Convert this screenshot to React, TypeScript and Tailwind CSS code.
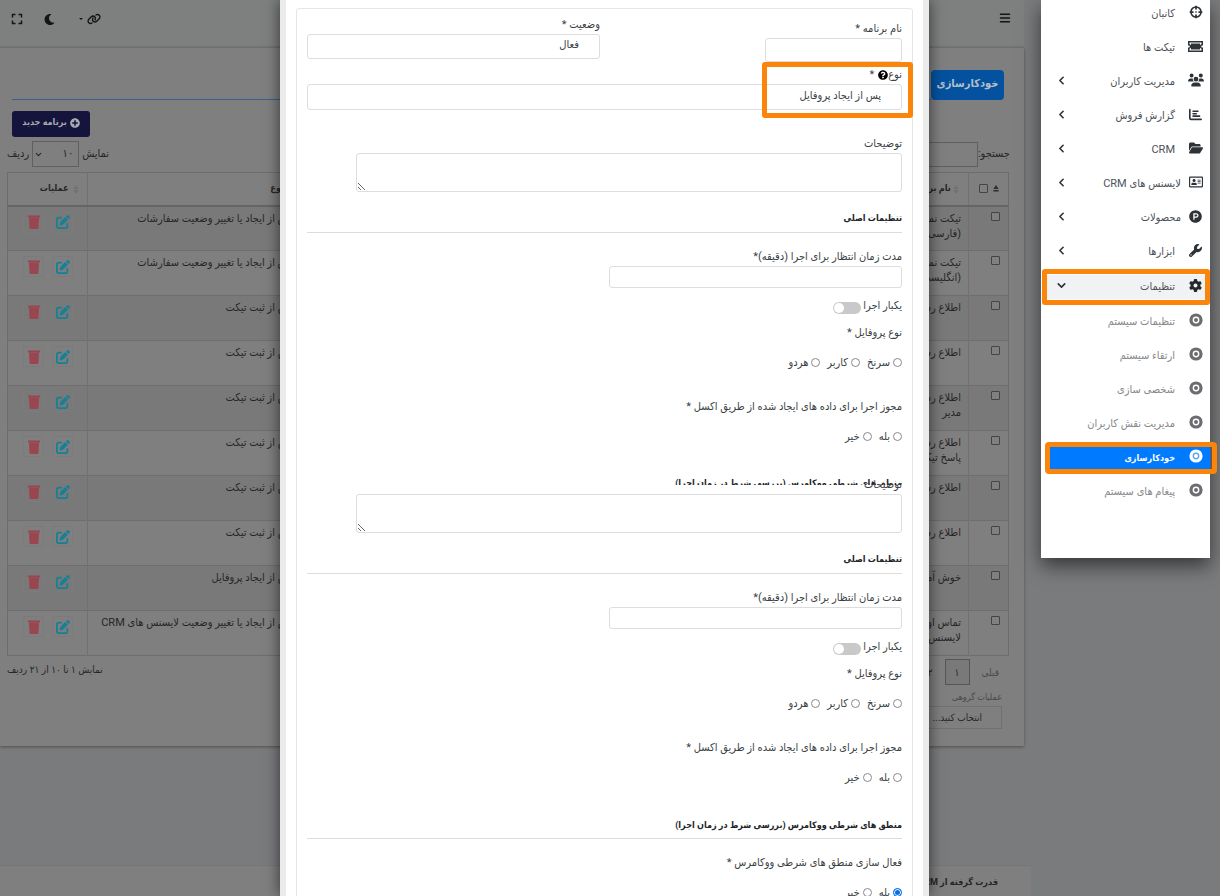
import { useState, type ReactNode } from "react";
import { FaRegAddressCard, FaProductHunt, FaMoon, FaExpand, FaPlusCircle, FaQuestionCircle } from "react-icons/fa";
import { FaChartBar, FaBars, FaLink, FaUsers, FaFolderOpen, FaWrench, FaGear, FaPenToSquare } from "react-icons/fa6";
import { ChevronDown, ChevronLeft } from "lucide-react";

function TargetIcon() {
  return (
    <svg viewBox="0 0 16 16" className="h-[14px] w-[14px]" fill="none" stroke="currentColor">
      <circle cx="8" cy="8" r="5.8" strokeWidth="1.8" />
      <path d="M8 .8v4.4M8 10.800v4.400M.8 8h4.400M10.800 8h4.400" strokeWidth="2" />
      <path d="M8 7.200v1.600M7.200 8h1.600" strokeWidth="1.200" />
    </svg>
  );
}

function TicketIcon() {
  return (
    <svg viewBox="0 0 30 22" className="h-[11px] w-[15px]" fill="none" stroke="currentColor">
      <path d="M1.500 1.500h27v6a3.500 3.500 0 0 0 0 7v6h-27v-6a3.500 3.500 0 0 0 0-7z" strokeWidth="3" />
      <path d="M6 5h18v12H6z" fill="currentColor" stroke="none" />
    </svg>
  );
}

function TrashIcon() {
  return (
    <svg viewBox="0 0 12 14" className="h-[14px] w-[12px]" fill="currentColor">
      <path d="M0 .5h12v2H0z" />
      <path d="M1 2.500h10l-.5 10.200a1.300 1.300 0 0 1-1.300 1.300H2.800a1.300 1.300 0 0 1-1.300-1.300z" />
    </svg>
  );
}

function DotIcon({ active = false }: { active?: boolean }) {
  return (
    <svg viewBox="0 0 14 14" className="h-[14px] w-[14px]">
      <circle cx="7" cy="7" r="6.6" fill="currentColor" />
      <circle cx="7" cy="7" r="2.7" fill="none" strokeWidth="1.4" className={active ? "stroke-[#5ea6ee]" : "stroke-white"} />
    </svg>
  );
}

type Item = { label: string; icon: ReactNode; arrow?: boolean; wide?: boolean };

const items: Item[] = [
  { label: "کانبان", icon: <TargetIcon /> },
  { label: "تیکت ها", icon: <TicketIcon /> },
  { label: "مدیریت کاربران", icon: <FaUsers size={16} />, arrow: true },
  { label: "گزارش فروش", icon: <FaChartBar size={13} />, arrow: true },
  { label: "CRM", icon: <FaFolderOpen size={14} />, arrow: true },
  { label: "لایسنس های CRM", icon: <FaRegAddressCard size={14} />, arrow: true, wide: true },
  { label: "محصولات", icon: <FaProductHunt size={13} />, arrow: true, wide: true },
  { label: "ابزارها", icon: <FaWrench size={13} />, arrow: true },
];

const subItems = ["تنظیمات سیستم", "ارتقاء سیستم", "شخصی سازی", "مدیریت نقش کاربران", "خودکارسازی", "پیغام های سیستم"];

function Sidebar() {
  return (
    <aside className="relative z-20 w-[169px] shrink-0 self-start bg-white pb-[51px] text-[#4c5258] shadow-[0_8px_18px_rgba(0,0,0,0.55)]">
      <nav className="-mt-[5px] text-[11px]">
        <ul>
          {items.map((it) => (
            <li key={it.label}>
              <a href="#" className="flex h-[34px] items-center pr-[5px] pl-[14px]">
                <span className="flex w-[19px] justify-center text-[#2e3338]">{it.icon}</span>
                <span className={it.wide ? "mr-[5px] grow pt-[5px]" : "mr-[11px] grow pt-[5px]"}>{it.label}</span>
                {it.arrow && <ChevronLeft size={13} strokeWidth={3} className="text-[#2e3338]" />}
              </a>
            </li>
          ))}
          <li className="mt-px">
            <a href="#" className="relative flex h-[34px] items-center pr-[5px] pl-[14px]">
              <span className="absolute inset-x-[5px] top-[7px] bottom-[3px] bg-[#f1f2f4]" />
              <span className="relative flex w-[19px] justify-center text-[#23282d]"><FaGear size={13} /></span>
              <span className="relative mr-[11px] grow pt-[5px]">تنظیمات</span>
              <ChevronDown size={13} strokeWidth={3} className="relative text-[#2e3338]" />
              <span className="absolute top-px right-0 h-[36px] w-[168px] rounded-[3px] border-[5px] border-[#fb850b]" />
            </a>
            <ul className="mt-px text-[#85888b]">
              {subItems.map((label) => {
                const active = label === "خودکارسازی";
                return (
                  <li key={label}>
                    <a href="#" className={active ? "relative flex h-[34px] items-center pr-[5px] text-[9px] font-bold text-white" : "relative flex h-[34px] items-center pr-[5px]"}>
                      {active && <span className="absolute top-[7px] right-0 bottom-[3px] left-[9px] bg-[#007bff]" />}
                      <span className={active ? "relative flex w-[19px] justify-center" : "relative flex w-[19px] justify-center text-[#6a6c6f]"}><DotIcon active={active} /></span>
                      <span className="relative mr-[11px] pt-[5px]">{label}</span>
                      {active && <span className="absolute top-[3px] -right-[7px] h-[32px] w-[172px] rounded-[4px] border-[5px] border-[#fb850b]" />}
                    </a>
                  </li>
                );
              })}
            </ul>
          </li>
        </ul>
      </nav>
    </aside>
  );
}

const orders = "پس از ایجاد یا تغییر وضعیت سفارشات";
const ticket = "پس از ثبت تیکت";
const rows: [string, string, string][] = [
  ["تیکت نمونه", "(فارسی)", orders],
  ["تیکت نمونه", "(انگلیسی)", orders],
  ["اطلاع رسانی", "", ticket],
  ["اطلاع رسانی", "", ticket],
  ["اطلاع رسانی", "مدیر", ticket],
  ["اطلاع رسانی", "پاسخ تیکت", ticket],
  ["اطلاع رسانی", "", ticket],
  ["اطلاع رسانی", "", ticket],
  ["خوش آمدگویی", "", "پس از ایجاد پروفایل"],
  ["تماس اولیه", "لایسنس", "پس از ایجاد یا تغییر وضعیت لایسنس های CRM"],
];

function Sort({ asc = false }: { asc?: boolean }) {
  return (
    <svg viewBox="0 0 6 10" className={asc ? "inline h-[10px] w-[6px] text-[#2d2d2d]" : "inline h-[10px] w-[6px] text-[#717171]"}>
      <path d="M3 1l2.6 4H.4z" fill="currentColor" />
      {asc ? <path d="M.4 6h5.200v1.500H.4z" fill="currentColor" /> : <path d="M3 10l2.6-4H.4z" fill="currentColor" />}
    </svg>
  );
}

const box = "block h-[9px] w-[9px] appearance-none rounded-[1px] border border-[#444] bg-[#808080]";
const action = "flex h-[21px] w-[21px] items-center justify-center rounded-[2px] border border-[#7b7b7b]";

function Background() {
  return (
    <div className="flex min-w-0 grow flex-col text-[10px] text-[#262626]">
      <header className="mr-[17px] flex h-[48px] items-start justify-between border-b-2 border-[#767677] bg-[#7e7f7f] pt-[12px] pr-[13px] pl-[11px] text-[#151515]">
        <button aria-label="منو"><FaBars size={12} /></button>
        <div className="flex items-center">
          <button aria-label="پیوندها" className="ml-[24px] flex items-center gap-[4px]">
            <FaLink size={14} />
            <span className="border-x-2 border-t-2 border-x-transparent border-t-[#151515]" />
          </button>
          <button aria-label="حالت تیره" className="ml-[21px]"><FaMoon size={11} /></button>
          <button aria-label="تمام صفحه"><FaExpand size={12} /></button>
        </div>
      </header>
      <main className="mr-[17px] h-[698px] bg-[#7f7f7f] shadow-[0_1px_3px_rgba(0,0,0,0.35)]">
        <div className="flex items-end pt-[22px] pr-[20px] pl-[12px]">
          <button className="h-[30px] w-[73px] rounded-[4px] bg-[#04529f] pb-[2px] text-[11px] font-bold text-[#b3bfcb]">خودکارسازی</button>
          <span className="h-px grow bg-[#38608f]" />
        </div>
        <div className="mt-[11px] flex justify-end pl-[12px]">
          <button className="flex h-[26px] w-[78px] items-center justify-center gap-[3px] rounded-[3px] bg-[#14143c] pb-[3px] text-[9px] font-bold text-[#a9a9b0]">
            <FaPlusCircle size={10} />برنامه جدید
          </button>
        </div>
        <div className="mt-[4px] flex items-center justify-between pr-[14px] pl-[7px] text-[11px]">
          <label className="flex items-center">جستجو:
            <input className="h-[25px] w-[120px] border border-[#5f5f5f] bg-transparent" />
          </label>
          <label className="flex items-center gap-[3px]">نمایش
            <span className="relative flex items-center">
              <select className="h-[26px] w-[47px] appearance-none border border-[#606060] bg-transparent pr-[5px]"><option>۱۰</option></select>
              <ChevronDown size={9} strokeWidth={3} className="pointer-events-none absolute left-[2px]" />
            </span>
            ردیف
          </label>
        </div>
        <div className="mt-[5px] pr-[15px] pl-[7px]">
          <table className="w-full table-fixed border-collapse border border-[#6c6c6c] text-[11px]">
            <thead>
              <tr className="h-[33px] border-b-2 border-[#656565] text-right text-[9px] font-bold">
                <th className="w-[40px] border-l border-[#717171]">
                  <span className="flex items-center gap-[5px] pr-[9px]"><Sort asc /><input type="checkbox" aria-label="همه" className={box} /></span>
                </th>
                <th className="border-l border-[#717171] pr-[9px]"><Sort /> نام برنامه</th>
                <th className="w-[213px] border-l border-[#717171] pr-[16px]">نوع</th>
                <th className="w-[80px] pr-[8px]"><Sort />&nbsp; عملیات</th>
              </tr>
            </thead>
            <tbody>
              {rows.map(([a, b, c], i) => (
                <tr key={i} className="h-[45px] border-b border-[#6e6e6e] align-top leading-[15px] odd:bg-[#797979]">
                  <td className="border-l border-[#717171] pt-[5px] pr-[8px]"><input type="checkbox" aria-label={a} className={box} /></td>
                  <td className="border-l border-[#717171] pt-[4px] pr-[7px]">{a}<br />{b}</td>
                  <td className="border-l border-[#717171] pt-[4px] pr-[7px] whitespace-nowrap">{c}</td>
                  <td>
                    <span className="flex justify-end gap-[8px] pt-[5px] pl-[15px]">
                      <button aria-label="ویرایش" className={`${action} text-[#158096]`}><FaPenToSquare size={14} /></button>
                      <button aria-label="حذف" className={`${action} text-[#9a4650]`}><TrashIcon /></button>
                    </span>
                  </td>
                </tr>
              ))}
            </tbody>
          </table>
        </div>
        <div className="mt-[3px] flex items-start justify-between pr-[25px] pl-[7px]">
          <div className="flex h-[26px] items-center">
            <button className="ml-[12px] text-[#4a4a4a]">قبلی</button>
            <button className="h-[26px] w-[25px] border border-[#555] bg-[#797979]">۱</button>
            <button className="mr-[12px]">۲</button>
          </div>
          <p className="leading-[22px]">نمایش ۱ تا ۱۰ از ۲۱ ردیف</p>
        </div>
        <div className="flex flex-col items-start pt-[3px] pr-[22px]">
          <label htmlFor="bulk" className="text-[9px] leading-[18px] text-[#4a4a4a]">عملیات گروهی</label>
          <select id="bulk" className="h-[23px] w-[160px] appearance-none border border-[#707070] bg-transparent pr-[19px]"><option>انتخاب کنید...</option></select>
        </div>
      </main>
      <footer className="mt-auto mr-[10px] h-[31px] border-t border-[#767676] bg-[#7f7f7f] pt-[10px] pr-[33px] text-[9px] font-bold">
        قدرت گرفته از CRM
      </footer>
    </div>
  );
}

const field = "rounded-[3px] border border-[#dcddde] bg-white";
const caption = "h-5 leading-[22px]";
const heading = "text-[9px] leading-5 font-bold text-[#212529]";

function Radios({ name, options, initial }: { name: string; options: string[]; initial?: string }) {
  const [value, setValue] = useState(initial);
  return (
    <div className="mt-[10px] flex h-5 items-center gap-[7px]">
      {options.map((o) => (
        <label key={o} className="flex items-center gap-[3px]">
          <input type="radio" name={name} checked={value === o} onChange={() => setValue(o)} className="h-[9px] w-[9px] appearance-none rounded-full border border-[#8a8a8a] bg-white checked:border-[#0b6fe0] checked:bg-[#0b6fe0] checked:shadow-[inset_0_0_0_1px_white]" />
          <span className="pt-[3px]">{o}</span>
        </label>
      ))}
    </div>
  );
}

function MainSettings({ id }: { id: string }) {
  return (
    <>
      <div className="flex flex-col items-start">
        <label htmlFor={`${id}-desc`} className={caption}>توضیحات</label>
        <textarea id={`${id}-desc`} className={`${field} block h-[39px] w-[546px] resize`} />
      </div>
      <h3 className={`${heading} h-[41px] border-b border-[#dcdcdc] pt-[16px]`}>تنظیمات اصلی</h3>
      <div className="flex flex-col items-start pt-[13px]">
        <label htmlFor={`${id}-wait`} className={caption}>مدت زمان انتظار برای اجرا (دقیقه)*</label>
        <input id={`${id}-wait`} className={`${field} h-[22px] w-[293px]`} />
      </div>
      <label className="mt-[8px] flex h-5 w-fit items-center gap-[2px]">یکبار اجرا
        <input type="checkbox" className="peer sr-only" />
        <span className="mt-[3px] flex h-[12px] w-[28px] items-center justify-end rounded-full bg-[#c9c9c9] p-px peer-checked:justify-start peer-checked:bg-[#007bff]">
          <span className="h-[10px] w-[10px] rounded-full bg-white" />
        </span>
      </label>
      <p className={`${caption} mt-[6px]`}>نوع پروفایل *</p>
      <Radios name={`${id}-profile`} options={["سرنخ", "کاربر", "هردو"]} />
      <p className={`${caption} mt-[24px]`}>مجوز اجرا برای داده های ایجاد شده از طریق اکسل *</p>
      <Radios name={`${id}-excel`} options={["بله", "خیر"]} />
    </>
  );
}

function Modal() {
  return (
    <div className="pointer-events-none absolute inset-0 z-10 flex justify-center overflow-hidden pr-[11px]">
      <section role="dialog" aria-label="برنامه" className="pointer-events-auto w-[649px] self-stretch border-x-[6px] border-[#ebebeb] bg-white px-[10px] pt-[8px] shadow-[0_0_14px_rgba(0,0,0,0.6)]">
        <form className="min-h-full rounded-[3px] border border-[#e6e6e6] px-[10px] pt-[5px] text-[11px] text-[#3a3f44]">
          <div className="flex h-[50px] justify-between">
            <div className="flex flex-col items-start pt-[4px]">
              <label htmlFor="name" className={caption}>نام برنامه *</label>
              <input id="name" className={`${field} h-[24px] w-[137px]`} />
            </div>
            <div className="flex w-[293px] flex-col items-start">
              <label htmlFor="status" className={caption}>وضعیت *</label>
              <select id="status" className={`${field} h-[25px] w-full appearance-none pr-[20px] pb-[2px]`}><option>فعال</option></select>
            </div>
          </div>
          <div className="relative mb-[23px]">
            <label htmlFor="kind" className="flex h-5 items-center pt-[2px]">نوع<FaQuestionCircle size={10} className="ml-[4px] text-black" />*</label>
            <select id="kind" className={`${field} block h-[26px] w-full appearance-none pr-[20px] pb-[2px]`}><option>پس از ایجاد پروفایل</option></select>
            <span className="pointer-events-none absolute -top-[2px] -right-[11px] h-[56px] w-[151px] rounded-[3px] border-[5px] border-[#fb850b]" />
          </div>
          <MainSettings id="first" />
          <h3 className={`${heading} mt-[27px] h-[12px] overflow-hidden`}>منطق های شرطی ووکامرس (بررسی شرط در زمان اجرا)</h3>
          <div className="-mt-[11px]"><MainSettings id="second" /></div>
          <h3 className={`${heading} h-[52px] border-b border-[#dcdcdc] pt-[28px]`}>منطق های شرطی ووکامرس (بررسی شرط در زمان اجرا)</h3>
          <p className={`${caption} mt-[13px]`}>فعال سازی منطق های شرطی ووکامرس *</p>
          <Radios name="woo" options={["بله", "خیر"]} initial="بله" />
        </form>
      </section>
    </div>
  );
}

export default function App() {
  return (
    <div dir="rtl" className="relative flex h-screen overflow-hidden bg-[#7a7b7d] pr-[10px] font-[Roboto,'DejaVu_Sans_Condensed','DejaVu_Sans',sans-serif]">
      <Sidebar />
      <Background />
      <Modal />
    </div>
  );
}
